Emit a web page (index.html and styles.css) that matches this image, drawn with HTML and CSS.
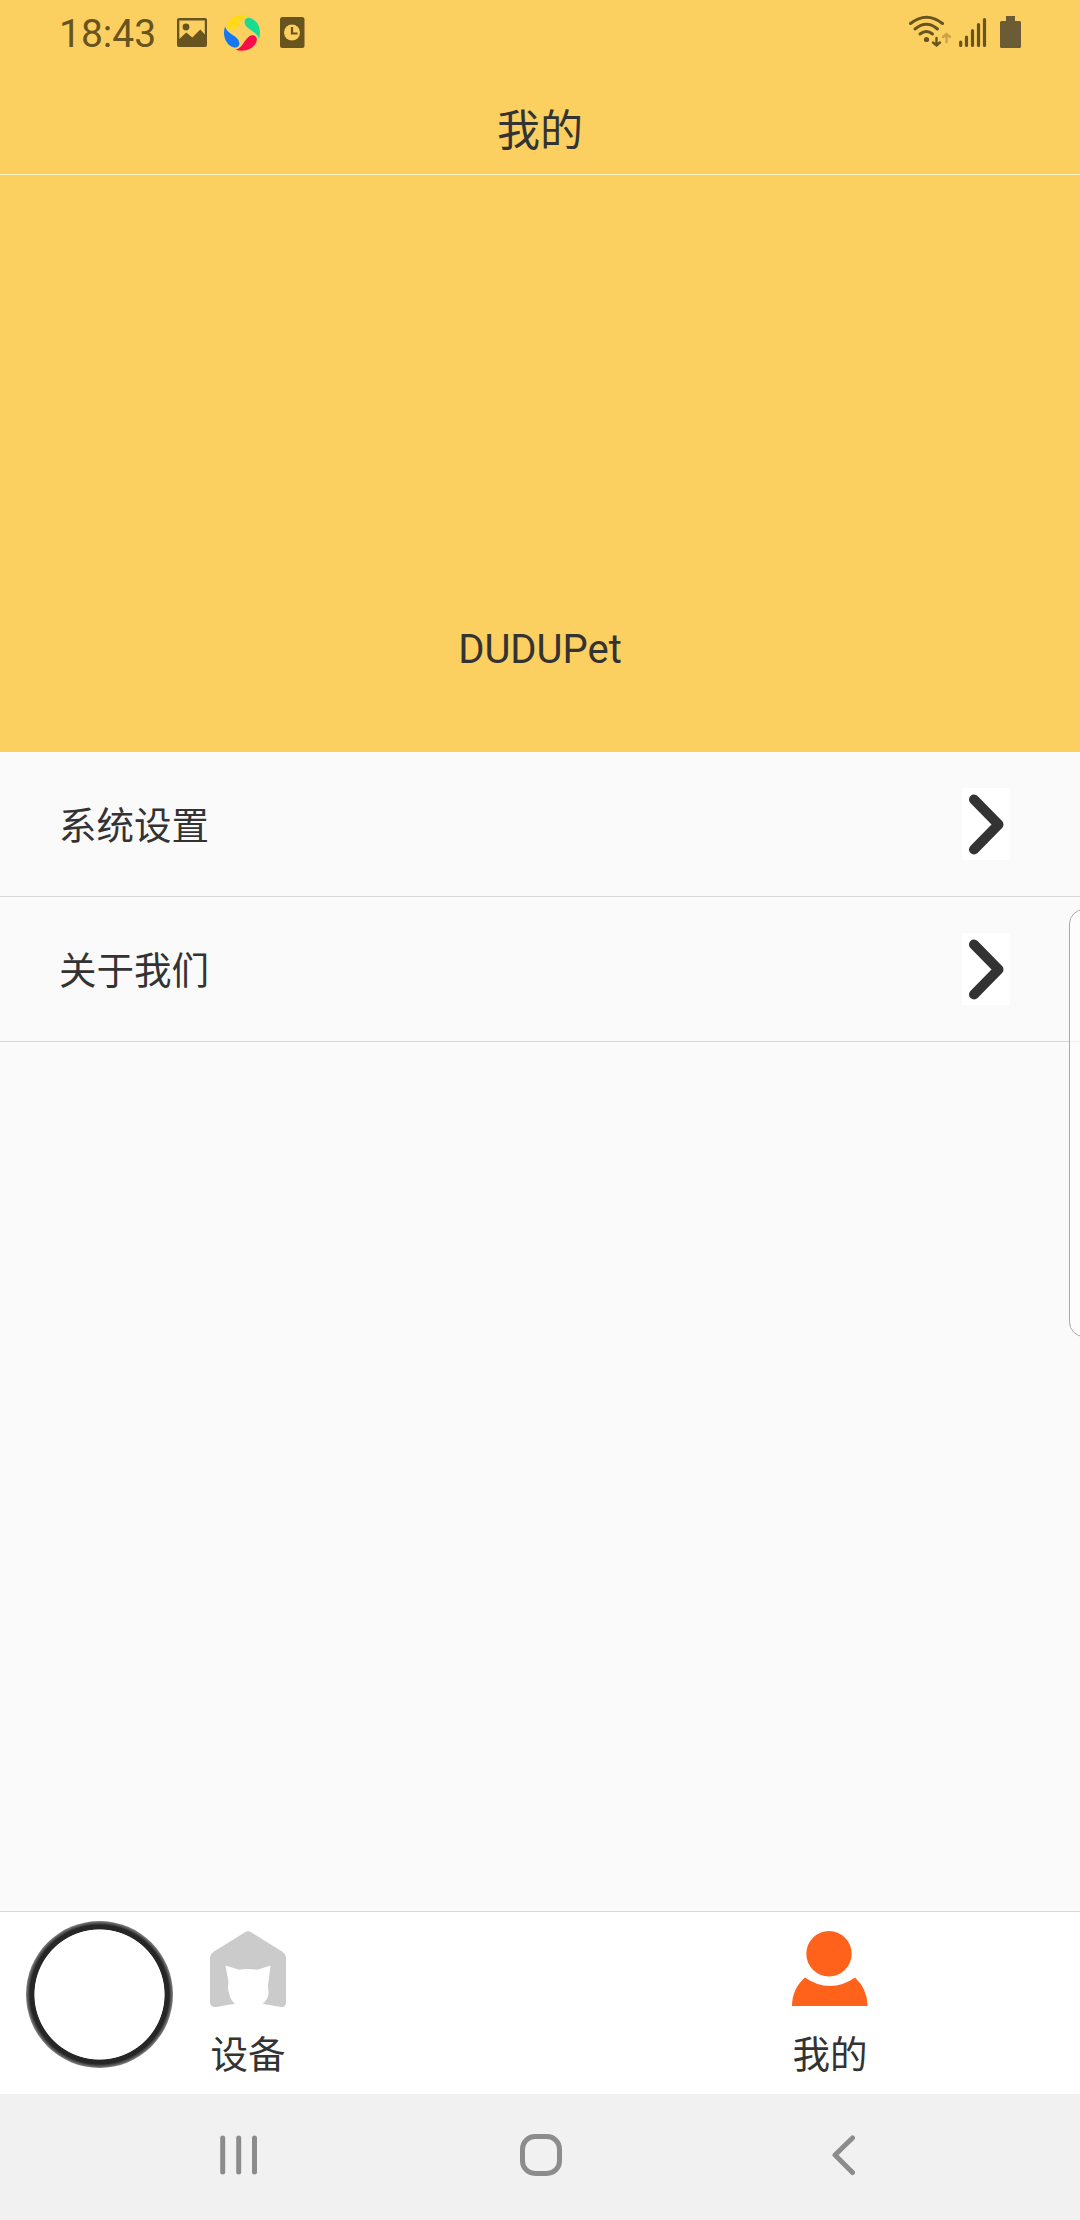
FILE: index.html
```html
<!DOCTYPE html>
<html lang="zh-CN">
<head>
  <meta charset="UTF-8">
  <title>我的</title>
  <link rel="stylesheet" href="styles.css">
</head>
<body>

  <div class="top">
    <div class="status-bar">
      <span class="clock">18:43</span>
      <svg class="status-left" width="130" height="40" viewBox="175 12 130 40">
        <!-- gallery -->
        <path fill="#68541f" fill-rule="evenodd" d="M179 18h26q2 0 2 2v25q0 2-2 2h-26q-2 0-2-2V20q0-2 2-2zM179.300 20.500V39l7-6.500 6 5 8-8 4.500 5V20.500z"/>
        <circle cx="186" cy="27" r="3.400" fill="#68541f"/>
        <!-- pinwheel -->
        <path id="leaf" fill="#18dc92" d="M259 39C262 30 258 20 250 18C245 17 243 22 246 26C250 31 257 32 259 39z"/>
        <path fill="#f70d4a" transform="rotate(90 242 32.700)" d="M259 39C262 30 258 20 250 18C245 17 243 22 246 26C250 31 257 32 259 39z"/>
        <path fill="#1677f2" transform="rotate(180 242 32.700)" d="M259 39C262 30 258 20 250 18C245 17 243 22 246 26C250 31 257 32 259 39z"/>
        <path fill="#ffd91a" transform="rotate(270 242 32.700)" d="M259 39C262 30 258 20 250 18C245 17 243 22 246 26C250 31 257 32 259 39z"/>
        <!-- clock app -->
        <rect x="280" y="17" width="24.500" height="31" rx="2.500" fill="#68541f"/>
        <circle cx="292" cy="32.500" r="8" fill="#fbcf60"/>
        <path d="M292 27v6.500h5.500" fill="none" stroke="#68541f" stroke-width="2.200"/>
      </svg>
      <svg class="status-right" width="116" height="40" viewBox="906 12 116 40">
        <g fill="none" stroke="#68541f" stroke-width="3" stroke-linecap="round">
          <path d="M910.500 23.500Q926.500 11 942.500 23.500"/>
          <path d="M915 29Q926.500 19.500 937.500 29"/>
          <path d="M920 34Q926.500 29 932.500 34"/>
          <path d="M936.500 38v7M933 42.500l3.500 3 3.500-3" stroke-width="2.400"/>
          <path d="M946.500 42v-7M943 37l3.500-3 3.500 3" stroke-width="2.400" stroke="#c9a34a"/>
          <path d="M960.700 42v3.500M966.500 37v8.500M972.500 30.500v15M978.500 24.500v21M984.500 19.500v26" stroke-width="3.200"/>
        </g>
        <circle cx="926.500" cy="39.500" r="2.600" fill="#68541f"/>
        <path fill="#6c5c35" d="M1006 16h9v5h4.500q1.500 0 1.500 1.500v24q0 1.500-1.500 1.500h-18q-1.500 0-1.500-1.500v-24q0-1.500 1.500-1.500h4.500z"/>
      </svg>
    </div>
    <h1 class="title">我的</h1>
  </div>

  <div class="profile">
    <span class="name">DUDUPet</span>
  </div>

  <ul class="menu">
    <li>
      <span>系统设置</span>
      <svg class="arrow" viewBox="0 0 48 72"><path d="M12 11.500L36.500 36.500L12 61.500"/></svg>
    </li>
    <li>
      <span>关于我们</span>
      <svg class="arrow" viewBox="0 0 48 72"><path d="M12 11.500L36.500 36.500L12 61.500"/></svg>
    </li>
  </ul>

  <div class="tab-bar">
    <div class="tab">
      <svg width="76" height="76" viewBox="0 0 76 76">
        <path fill="#cbcbcb" d="M35 1.200q3-1.700 6 0L72 20.500q4 2.500 4 7V71q0 5.500-5 5L52.500 72.800Q59 68 58.500 60Q57.500 55 58.500 51L60.500 34.500L47.500 38.700Q38 37.500 29 38.700L15.500 34.500L18.500 51Q17.500 55 18.500 60Q20 69 25 72.800L6 76q-6 .5-6-5V27.500q0-4.500 4-7z"/>
      </svg>
      <span>设备</span>
    </div>
    <div class="tab">
      <svg width="76" height="76" viewBox="0 0 76 76">
        <circle cx="37" cy="22.700" r="22.700" fill="#ff621a"/>
        <path fill="#ff621a" d="M0 75Q0 58 13 46.500Q25 55 38 55Q51 55 63 46.500Q75.500 58 75.500 75z"/>
      </svg>
      <span>我的</span>
    </div>
  </div>

  <div class="nav-bar">
    <svg width="38" height="42" viewBox="0 0 38 42"><path d="M2.700 4v34M18.700 4v34M34.500 4v34"/></svg>
    <svg class="home" width="42" height="42" viewBox="0 0 42 42"><rect x="2.500" y="2.500" width="37" height="37" rx="12.500"/></svg>
    <svg width="23" height="42" viewBox="0 0 23 42"><path d="M20.500 4L3 21L20.500 38.500"/></svg>
  </div>

  <!-- floating overlays -->
  <div class="assist-ball"></div>
  <div class="edge-panel"></div>

</body>
</html>
```

FILE: styles.css
```css
* {
  box-sizing: border-box;
}

body {
  position: relative;
  display: flex;
  flex-direction: column;
  width: 1080px;
  height: 2220px;
  margin: 0;
  overflow: hidden;
  background: #fafafa;
  color: #333;
  font-family: Roboto, "Noto Sans CJK SC", sans-serif;
}

svg {
  display: block;
}

.top {
  height: 175px;
  background: #fbcf60;
  border-bottom: 1px solid #fdf3c4;
}

.status-bar {
  display: flex;
  align-items: center;
  height: 64px;
  padding: 0 58px 0 59px;
}

.clock {
  width: 116px;
  margin-top: 4px;
  color: #68541f;
  font-size: 39px;
  line-height: 60px;
}

.status-right {
  margin-left: auto;
}

.title {
  margin: 0;
  padding-top: 37px;
  font-size: 43px;
  font-weight: 400;
  line-height: 60px;
  text-align: center;
}

.profile {
  display: flex;
  align-items: flex-end;
  justify-content: center;
  height: 577px;
  padding-bottom: 71px;
  background: #fbcf60;
  border-bottom: 1px solid #e9d093;
}

.name {
  font-size: 40px;
  line-height: 60px;
}

.menu {
  margin: 0;
  padding: 0;
  list-style: none;
}

.menu li {
  display: flex;
  align-items: center;
  justify-content: space-between;
  height: 145px;
  padding: 0 70px 0 59px;
  border-bottom: 1px solid #d9d9d9;
  font-size: 37.5px;
}

.menu span {
  padding-bottom: 3px;
}

.arrow {
  width: 48px;
  height: 72px;
  background: #fff;
}

.arrow path {
  fill: none;
  stroke: #333;
  stroke-width: 10;
  stroke-linecap: round;
  stroke-linejoin: round;
}

.tab-bar {
  display: flex;
  justify-content: space-between;
  height: 183px;
  margin-top: auto;
  padding: 19px 212px 0 210px;
  background: #fff;
  border-top: 1px solid #d9d9d9;
}

.tab {
  display: flex;
  flex-direction: column;
  align-items: center;
  gap: 18px;
  width: 76px;
  font-size: 37.5px;
  line-height: 60px;
}

.nav-bar {
  display: flex;
  align-items: center;
  justify-content: space-between;
  height: 126px;
  padding: 0 225px 4px 220px;
  background: #f1f1f1;
}

.nav-bar svg {
  fill: none;
  stroke: #8c8c8c;
  stroke-width: 5;
  stroke-linecap: round;
  stroke-linejoin: round;
}

.nav-bar .home {
  margin-right: 8px;
}

.assist-ball {
  position: absolute;
  left: 26px;
  top: 1921px;
  width: 147px;
  height: 147px;
  border-radius: 50%;
  background: radial-gradient(circle closest-side, #fff 64.7px, #262626 65.5px, #262626 69.5px, #858585 73.5px);
}

.edge-panel {
  position: absolute;
  left: 1069px;
  top: 909px;
  width: 30px;
  height: 428px;
  border: 1px solid #aaa;
  border-radius: 16px;
  background: rgba(255, 255, 255, 0.6);
}
```
